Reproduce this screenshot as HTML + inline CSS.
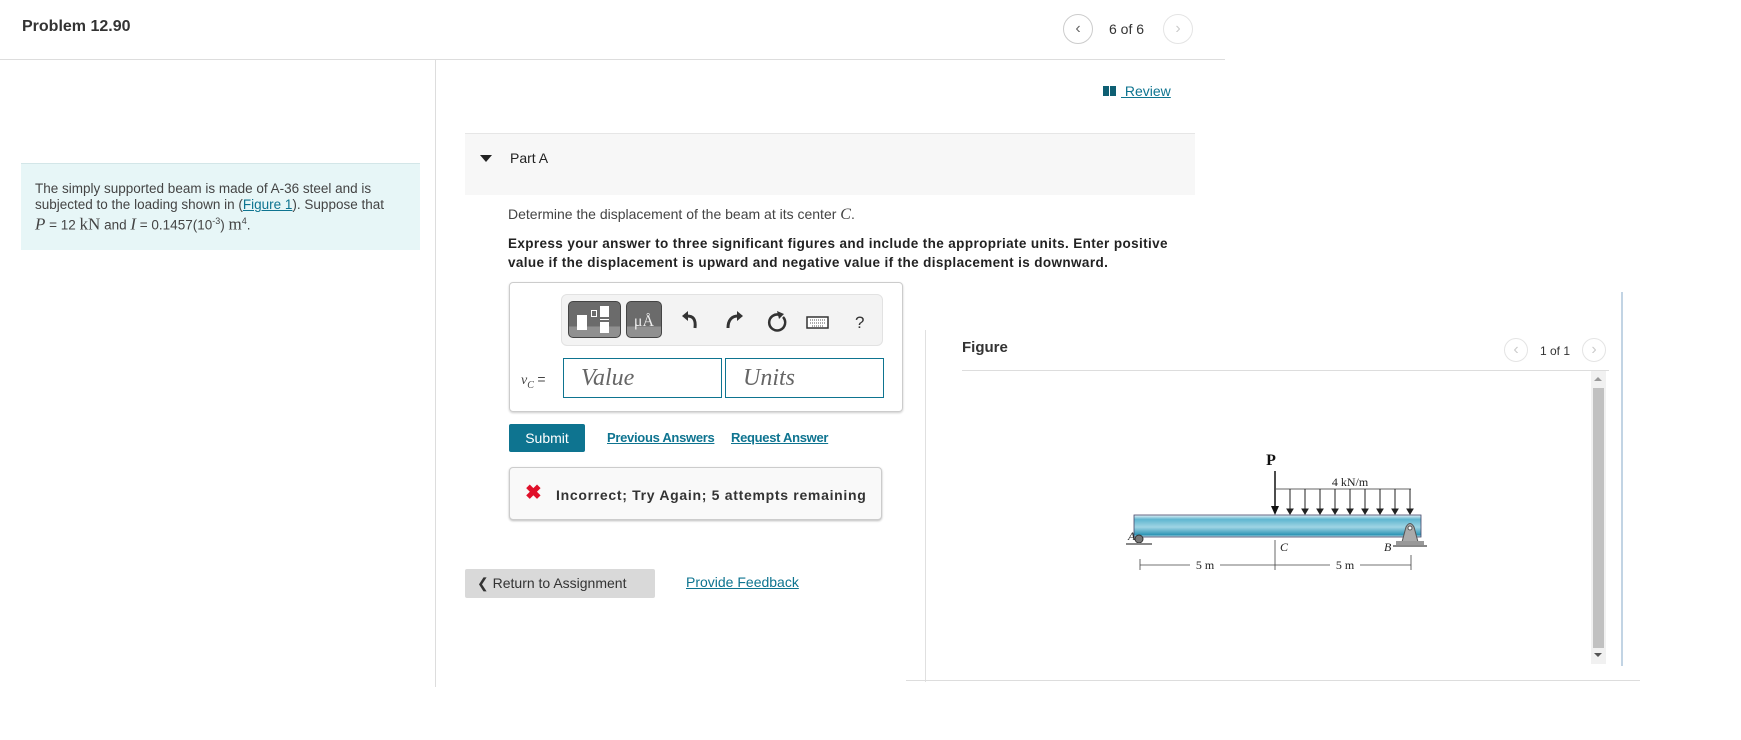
<!DOCTYPE html>
<html><head><meta charset="utf-8"><style>
*{margin:0;padding:0;box-sizing:border-box}
body{width:1741px;height:740px;background:#fff;font-family:"Liberation Sans",Arial,sans-serif;color:#333;position:relative;overflow:hidden}
.a{position:absolute;white-space:nowrap}
a,.lnk{color:#0e7490;text-decoration:underline}
.circ{position:absolute;width:30px;height:30px;border-radius:50%;border:1px solid #ccc;text-align:center;line-height:27px;font-size:16px;color:#666}
.ser{font-family:"Liberation Serif",serif;font-style:italic}
</style></head><body>
<div class="a" style="left:22px;top:18px;font-size:16px;font-weight:bold;color:#333">Problem 12.90</div>
<div class="circ" style="left:1063px;top:14px">&#x2039;</div>
<div class="a" style="left:1109px;top:21px;font-size:14px">6 of 6</div>
<div class="circ" style="left:1163px;top:14px;border-color:#e4e4e4;color:#ccc">&#x203A;</div>
<div class="a" style="left:0;top:59px;width:1225px;height:1px;background:#ddd"></div>
<div class="a" style="left:435px;top:59px;width:1px;height:628px;background:#ddd"></div>
<div class="a" style="left:1103px;top:86px;width:6px;height:10px;background:#0e5f73"></div>
<div class="a" style="left:1110px;top:86px;width:6px;height:10px;background:#0e5f73"></div>
<div class="a lnk" style="left:1121px;top:83px;font-size:14px">&nbsp;Review</div>

<div class="a" style="left:21px;top:163px;width:399px;height:87px;background:#e7f6f7;border-top:1px solid #d3e6e8"></div>
<div class="a" style="left:35px;top:181px;font-size:13.5px;line-height:16px;color:#444">The simply supported beam is made of A-36 steel and is<br>subjected to the loading shown in (<span class="lnk">Figure 1</span>). Suppose that<br><span class="ser" style="font-size:17px">P</span> = 12 <span style="font-family:'Liberation Serif',serif;font-size:17px">kN</span> and <span class="ser" style="font-size:17px">I</span> = 0.1457(10<sup style="font-size:9px">-3</sup>) <span style="font-family:'Liberation Serif',serif;font-size:17px">m</span><sup style="font-size:9px">4</sup>.</div>

<div class="a" style="left:465px;top:133px;width:730px;height:62px;background:#f7f7f7;border-top:1px solid #e6e6e6"></div>
<div class="a" style="left:480px;top:155px;width:0;height:0;border-left:6px solid transparent;border-right:6px solid transparent;border-top:7px solid #222"></div>
<div class="a" style="left:510px;top:150px;font-size:14px;color:#222">Part A</div>
<div class="a" style="left:508px;top:206px;font-size:14px;color:#444">Determine the displacement of the beam at its center <span class="ser" style="font-size:16px">C</span>.</div>
<div class="a" style="left:508px;top:234px;font-size:13.5px;line-height:19px;font-weight:bold;color:#222;letter-spacing:0.38px">Express your answer to three significant figures and include the appropriate units. Enter positive<br>value if the displacement is upward and negative value if the displacement is downward.</div>

<div class="a" style="left:509px;top:282px;width:394px;height:130px;border:1px solid #ccc;border-radius:4px;box-shadow:0 1px 2px #ccc"></div>
<div class="a" style="left:561px;top:294px;width:322px;height:52px;background:#f3f3f3;border:1px solid #e2e2e2;border-radius:6px"></div>
<div class="a" style="left:568px;top:301px;width:53px;height:37px;border-radius:5px;background:linear-gradient(#6b6b6b 70%,#909090 70%);border:1px solid #444"></div>
<div class="a" style="left:577px;top:315px;width:10px;height:15px;background:#fff"></div>
<div class="a" style="left:591px;top:310px;width:6px;height:7px;border:1px solid #fff"></div>
<div class="a" style="left:600px;top:306px;width:9px;height:11px;background:#fff"></div>
<div class="a" style="left:600px;top:319px;width:9px;height:1px;background:#fff"></div>
<div class="a" style="left:600px;top:322px;width:9px;height:11px;background:#fff"></div>
<div class="a" style="left:626px;top:301px;width:36px;height:37px;border-radius:5px;background:linear-gradient(#6b6b6b 70%,#909090 70%);border:1px solid #444;color:#eee;font-family:'Liberation Serif',serif;font-size:16px;text-align:center;line-height:40px">μÅ</div>
<svg class="a" style="left:680px;top:310px" width="200" height="28" viewBox="0 0 200 28">
<path d="M8 11 L2 6 L8 1 Z" fill="#333"/><path d="M7 6 C13 6 16 9 15 18" stroke="#333" stroke-width="3" fill="none"/>
<path d="M57 11 L63 6 L57 1 Z" fill="#333"/><path d="M58 6 C52 6 48 10 48 18" stroke="#333" stroke-width="3" fill="none"/>
<path d="M100 5 A8 8 0 1 0 103 7" stroke="#333" stroke-width="2.5" fill="none"/><path d="M97 1 L104 4 L99 9 Z" fill="#333"/>
<rect x="127" y="7" width="21" height="11" fill="#fff" stroke="#333" stroke-width="1.5"/><path d="M130 10h15M130 13h15M132 16h11" stroke="#555" stroke-width="1" stroke-dasharray="1 1"/>
<text x="175" y="18" font-family="Liberation Sans" font-size="17" fill="#333">?</text>
</svg>
<div class="a ser" style="left:521px;top:371px;font-size:14px;color:#444">v<sub style="font-size:10px">C</sub> <span style="font-style:normal;font-family:'Liberation Sans'">=</span></div>
<div class="a ser" style="left:563px;top:358px;width:159px;height:40px;border:1px solid #0e7490;font-size:24px;color:#666;padding:6px 0 0 17px">Value</div>
<div class="a ser" style="left:725px;top:358px;width:159px;height:40px;border:1px solid #0e7490;font-size:24px;color:#666;padding:6px 0 0 17px">Units</div>

<div class="a" style="left:509px;top:424px;width:76px;height:28px;background:#0e7490;border-radius:2px;color:#fff;font-size:14px;text-align:center;line-height:28px">Submit</div>
<div class="a lnk" style="left:607px;top:430px;font-size:13px;font-weight:bold;letter-spacing:-0.3px">Previous Answers</div>
<div class="a lnk" style="left:731px;top:430px;font-size:13px;font-weight:bold;letter-spacing:-0.3px">Request Answer</div>

<div class="a" style="left:509px;top:467px;width:373px;height:53px;background:#f9f9f9;border:1px solid #ccc;border-radius:4px;box-shadow:0 1px 2px #bbb"></div>
<div class="a" style="left:525px;top:483px;font-size:20px;font-weight:bold;color:#e0102a;line-height:20px">✖</div>
<div class="a" style="left:556px;top:487px;font-size:14px;font-weight:bold;color:#333;letter-spacing:0.7px">Incorrect; Try Again; 5 attempts remaining</div>

<div class="a" style="left:465px;top:569px;width:190px;height:29px;background:#d9d9d9;border-radius:2px;font-size:14px;color:#333;line-height:29px;padding-left:12px">&#x276E; Return to Assignment</div>
<div class="a lnk" style="left:686px;top:574px;font-size:14px">Provide Feedback</div>

<div class="a" style="left:925px;top:330px;width:1px;height:352px;background:#e0e0e0"></div>
<div class="a" style="left:906px;top:680px;width:734px;height:1px;background:#ddd"></div>
<div class="a" style="left:1621px;top:292px;width:2px;height:374px;background:#c2d4e4"></div>
<div class="a" style="left:962px;top:339px;font-size:15px;font-weight:bold;color:#333">Figure</div>
<div class="circ" style="left:1504px;top:338px;width:24px;height:24px;line-height:21px;border-color:#e4e4e4;color:#ccc">&#x2039;</div>
<div class="a" style="left:1540px;top:344px;font-size:12px">1 of 1</div>
<div class="circ" style="left:1582px;top:338px;width:24px;height:24px;line-height:21px;border-color:#e4e4e4;color:#ccc">&#x203A;</div>
<div class="a" style="left:962px;top:370px;width:647px;height:1px;background:#ddd"></div>
<div class="a" style="left:1591px;top:371px;width:15px;height:293px;background:#f1f1f1"></div>
<div class="a" style="left:1593px;top:388px;width:11px;height:260px;background:#c1c1c1"></div>
<div class="a" style="left:1594px;top:377px;width:0;height:0;border-left:4px solid transparent;border-right:4px solid transparent;border-bottom:4px solid #999"></div>
<div class="a" style="left:1594px;top:653px;width:0;height:0;border-left:4px solid transparent;border-right:4px solid transparent;border-top:4px solid #555"></div>

<svg class="a" style="left:1100px;top:440px" width="360" height="150" viewBox="0 0 360 150" font-family="Liberation Serif">
<defs><linearGradient id="g" x1="0" y1="0" x2="0" y2="1"><stop offset="0" stop-color="#e6f3f8"/><stop offset="0.2" stop-color="#5fb6d0"/><stop offset="0.55" stop-color="#9fd4e4"/><stop offset="0.9" stop-color="#2e95b5"/><stop offset="1" stop-color="#dcecf2"/></linearGradient></defs>
<rect x="34" y="75" width="287" height="22" fill="url(#g)" stroke="#446" stroke-width="0.8"/>
<text x="171" y="25" font-size="16" font-weight="bold" text-anchor="middle" fill="#111">P</text>
<line x1="175" y1="31" x2="175" y2="68" stroke="#111" stroke-width="1.5"/><path d="M171 66 L179 66 L175 75 Z" fill="#111"/>
<line x1="176" y1="49" x2="311" y2="49" stroke="#333" stroke-width="0.8"/>
<g stroke="#222" stroke-width="1" fill="#222">
<line x1="190" y1="49" x2="190" y2="70"/><line x1="205" y1="49" x2="205" y2="70"/><line x1="220" y1="49" x2="220" y2="70"/><line x1="235" y1="49" x2="235" y2="70"/><line x1="250" y1="49" x2="250" y2="70"/><line x1="265" y1="49" x2="265" y2="70"/><line x1="280" y1="49" x2="280" y2="70"/><line x1="295" y1="49" x2="295" y2="70"/><line x1="310" y1="49" x2="310" y2="70"/>
<path d="M187 69h6l-3 5z M202 69h6l-3 5z M217 69h6l-3 5z M232 69h6l-3 5z M247 69h6l-3 5z M262 69h6l-3 5z M277 69h6l-3 5z M292 69h6l-3 5z M307 69h6l-3 5z"/></g>
<text x="250" y="46" font-size="12" text-anchor="middle" fill="#222">4 kN/m</text>
<text x="28" y="100" font-size="12" font-style="italic" fill="#222">A</text>
<circle cx="39" cy="99" r="4" fill="#777" stroke="#333"/><line x1="26" y1="104" x2="52" y2="104" stroke="#888" stroke-width="2"/>
<path d="M302 102 L306 87 Q310 80 314 87 L318 102 Z" fill="#aaa" stroke="#555"/><circle cx="310" cy="88" r="2" fill="#fff" stroke="#555"/>
<rect x="296" y="101" width="28" height="4" fill="#999"/><line x1="293" y1="106" x2="327" y2="106" stroke="#888" stroke-width="2"/>
<text x="180" y="111" font-size="12" font-style="italic" fill="#222">C</text>
<text x="284" y="111" font-size="12" font-style="italic" fill="#222">B</text>
<line x1="175" y1="100" x2="175" y2="130" stroke="#444" stroke-width="0.8"/>
<g stroke="#444" stroke-width="0.8"><line x1="40" y1="119" x2="40" y2="130"/><line x1="311" y1="115" x2="311" y2="130"/>
<line x1="40" y1="125" x2="90" y2="125"/><line x1="120" y1="125" x2="175" y2="125"/><line x1="175" y1="125" x2="230" y2="125"/><line x1="260" y1="125" x2="311" y2="125"/></g>
<text x="105" y="129" font-size="12" text-anchor="middle" fill="#222">5 m</text>
<text x="245" y="129" font-size="12" text-anchor="middle" fill="#222">5 m</text>
</svg>
</body></html>
